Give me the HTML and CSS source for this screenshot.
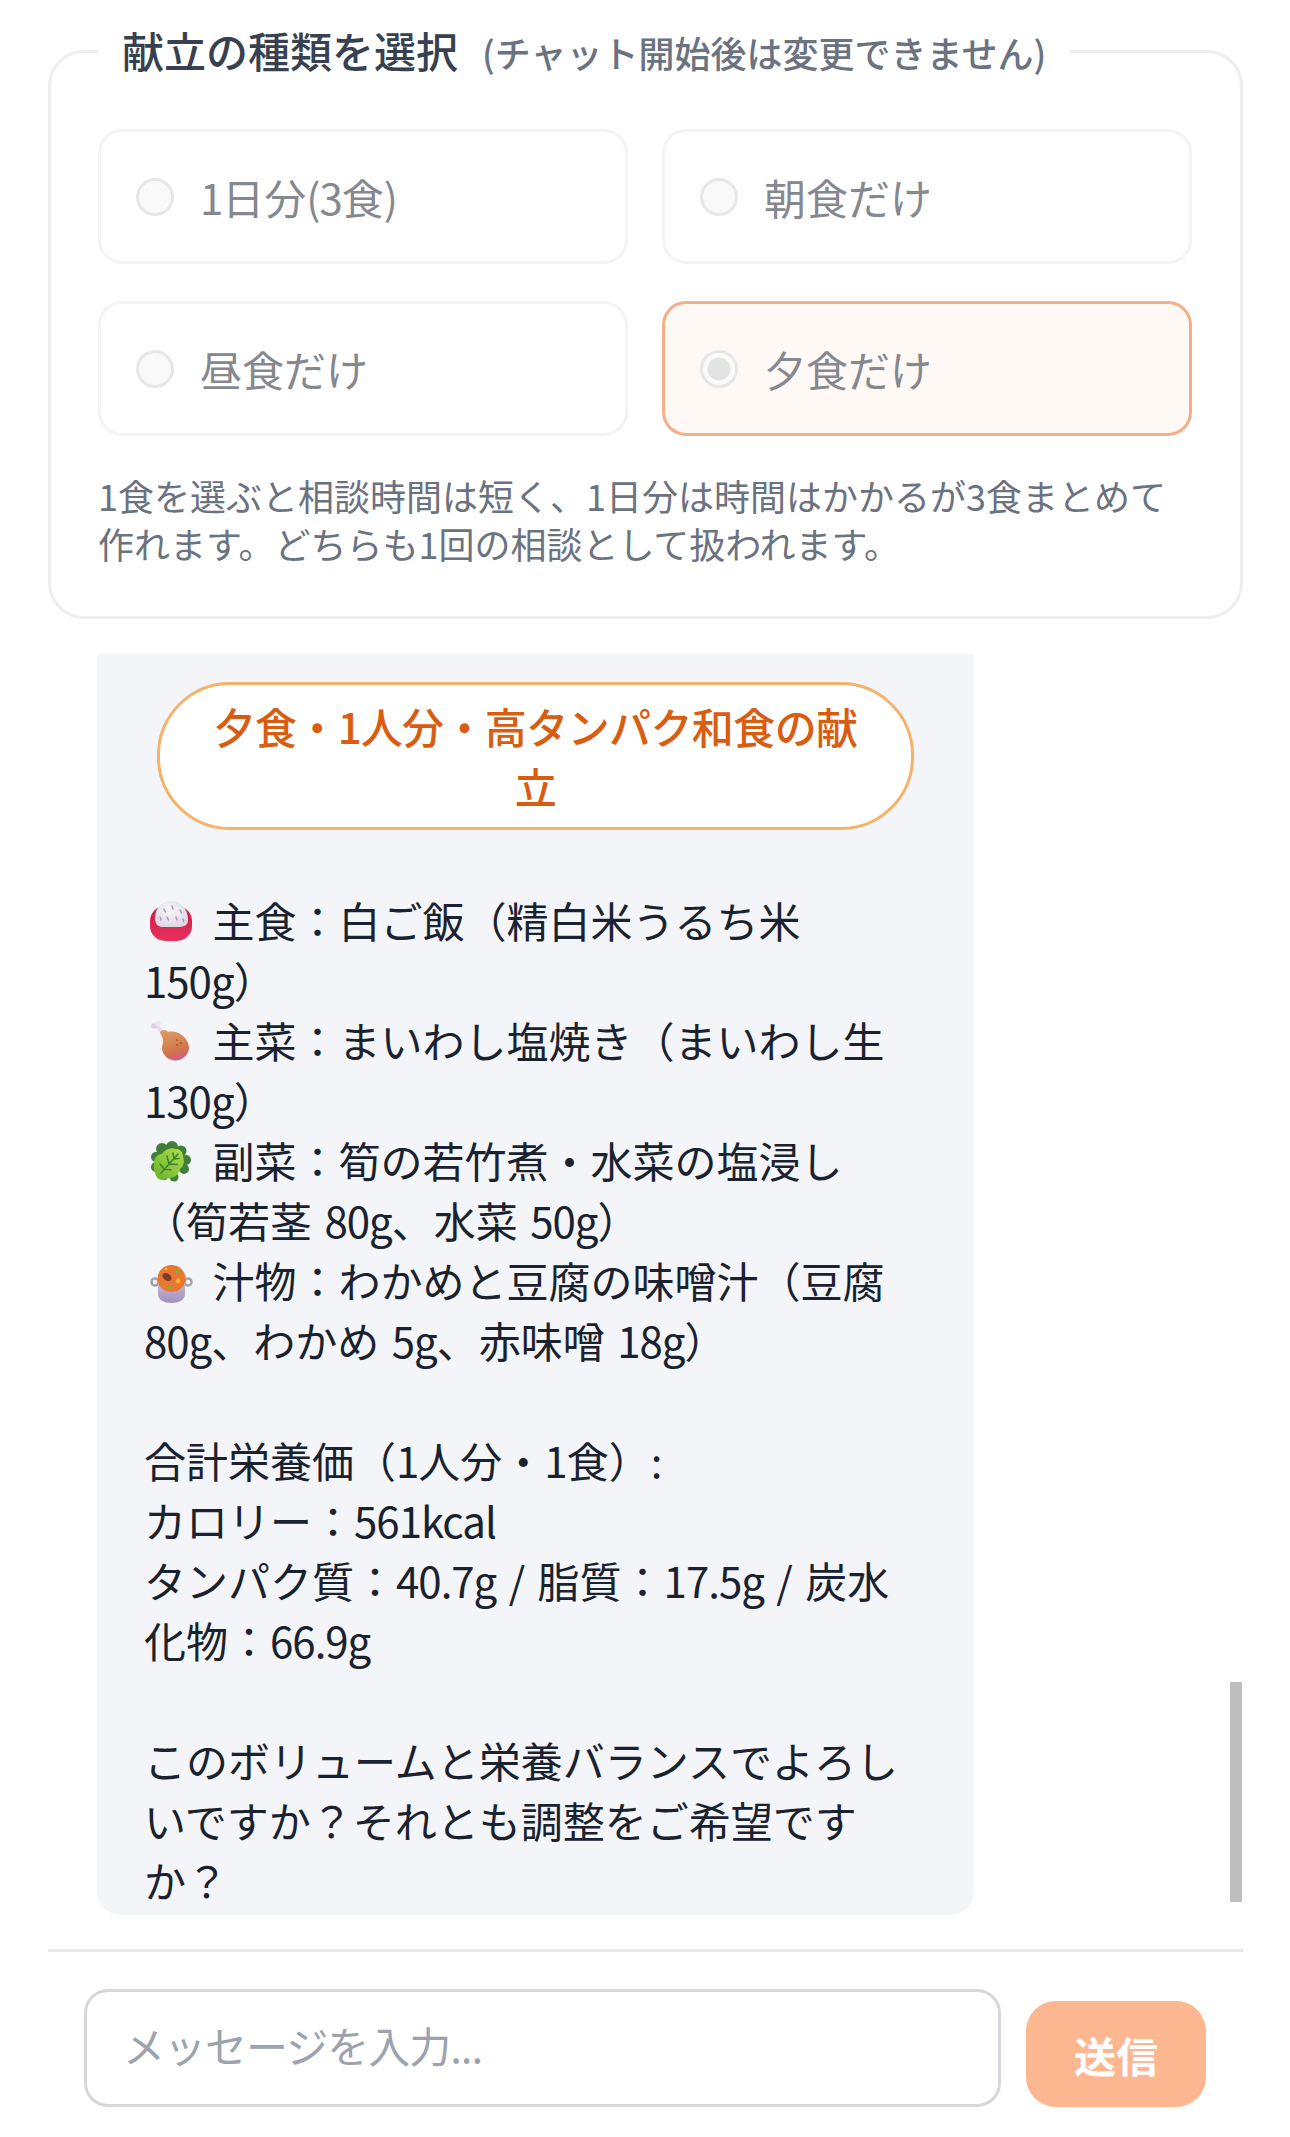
FILE: index.html
```html
<!DOCTYPE html>
<html lang="ja">
<head>
<meta charset="utf-8">
<title>献立チャット</title>
<link rel="stylesheet" href="styles.css">
</head>
<body>
<main class="app">
  <fieldset class="picker">
    <legend class="picker-legend"><span class="legend-main">献立の種類を選択</span><span class="legend-sub">(チャット開始後は変更できません)</span></legend>
    <div class="options">
      <label class="option"><input class="radio" type="radio" name="t" disabled><span><span class="num">1</span>日分<span class="num">(3</span>食<span class="num">)</span></span></label>
      <label class="option"><input class="radio" type="radio" name="t" disabled><span>朝食だけ</span></label>
      <label class="option"><input class="radio" type="radio" name="t" disabled><span>昼食だけ</span></label>
      <label class="option option-on"><input class="radio" type="radio" name="t" checked disabled><span>夕食だけ</span></label>
    </div>
    <p class="note">1食を選ぶと相談時間は短く、1日分は時間はかかるが3食まとめて作れます。どちらも1回の相談として扱われます。</p>
  </fieldset>

  <section class="chat">
    <article class="bubble">
      <h2 class="pill">夕食・<span class="num">1</span>人分・高タンパク和食の献立</h2>
      <p class="msg"><svg class="emoji" viewBox="0 0 52 52" aria-hidden="true"><defs><linearGradient id="bowl" x1="0" y1="0" x2="0" y2="1"><stop offset="0" stop-color="#c81f45"/><stop offset="1" stop-color="#ea2f5e"/></linearGradient><radialGradient id="rice" cx=".45" cy=".35" r=".7"><stop offset="0" stop-color="#f8f6fa"/><stop offset="1" stop-color="#dcd6e4"/></radialGradient></defs><rect x="6" y="10" width="42" height="35" rx="15" fill="url(#bowl)"/><path d="M11 22C11 12 18 5 27 5s17 7 17 19c0 6-5 7-10 7H19c-4 0-8-2-8-9z" fill="url(#rice)"/><path d="M20 13l1.500 3M28 10l1 3M36 14l1.500 3M23 21l1.500 3M32 21l1 3M16 21l1 3M39 23l.7 2.500" stroke="#a79ac0" stroke-width="1.500" stroke-linecap="round"/></svg> 主食：白ご飯（精白米うるち米<span class="num">150g</span>）<br>
<svg class="emoji" viewBox="0 0 52 52" aria-hidden="true"><defs><linearGradient id="leg" x1=".3" y1="0" x2=".6" y2="1"><stop offset="0" stop-color="#dd9a62"/><stop offset=".7" stop-color="#d0764a"/><stop offset="1" stop-color="#d6568e"/></linearGradient></defs><path d="M12 9l7 8" stroke="#e8ddee" stroke-width="4" stroke-linecap="round"/><circle cx="10" cy="10" r="2.800" fill="#dcd0e8"/><circle cx="14" cy="7.500" r="2.800" fill="#eee6f2"/><path d="M16 16c3-3 6-2 8 0 11-3 22 8 21 17-2 9-10 13-17 11-8-2-12-10-9-17 1-5-2-7-3-11z" fill="url(#leg)"/><circle cx="33" cy="24" r=".9" fill="#a9562f"/><circle cx="37" cy="27" r=".9" fill="#a9562f"/><circle cx="33" cy="29" r=".9" fill="#a9562f"/></svg> 主菜：まいわし塩焼き（まいわし生<span class="num">130g</span>）<br>
<svg class="emoji" viewBox="0 0 52 52" aria-hidden="true"><defs><linearGradient id="leaf" x1="0" y1="1" x2="1" y2="0"><stop offset="0" stop-color="#69b32b"/><stop offset="1" stop-color="#b0de4a"/></linearGradient></defs><g fill="#3f7f37"><circle cx="28" cy="11" r="6"/><circle cx="18" cy="13" r="6"/><circle cx="37" cy="15" r="5.500"/><circle cx="42" cy="24" r="5"/><circle cx="40" cy="33" r="5"/><circle cx="12" cy="21" r="5"/><circle cx="12" cy="31" r="5"/><circle cx="30" cy="41" r="4.500"/><circle cx="20" cy="40" r="4"/></g><path d="M10 27c0-6 4-9 8-9 3-5 9-7 14-5 5 0 7 4 7 8 2 5 0 10-3 12-2 7-8 10-13 9-5 3-10 2-11-3-2-3-3-8-2-12z" fill="url(#leaf)"/><path d="M17 37l17-19M25 28l-2-8M25 28l8 .5M30 23l-1-6M30 23l5-.5M20 33l-4-5M20 33l7 1" stroke="#3f7f37" stroke-width="1.600" stroke-linecap="round" fill="none"/></svg> 副菜：筍の若竹煮・水菜の塩浸し（筍若茎 <span class="num">80g</span>、水菜 <span class="num">50g</span>）<br>
<svg class="emoji" viewBox="0 0 52 52" aria-hidden="true"><defs><linearGradient id="pot" x1="0" y1="0" x2="0" y2="1"><stop offset="0" stop-color="#c8bcd6"/><stop offset="1" stop-color="#a390bd"/></linearGradient></defs><circle cx="11" cy="26" r="3.500" fill="none" stroke="#a8a2ae" stroke-width="2.600"/><circle cx="44" cy="26" r="3.500" fill="none" stroke="#a8a2ae" stroke-width="2.600"/><path d="M14 24h27v14c0 6-6 9-13.500 9S14 44 14 38z" fill="url(#pot)"/><ellipse cx="27.500" cy="22.500" rx="14" ry="13.500" fill="#e9772f"/><ellipse cx="23" cy="21" rx="5" ry="3.500" fill="#7d3b2c" transform="rotate(35 23 21)"/><circle cx="33" cy="16" r="2.200" fill="#7fae3a"/><circle cx="34" cy="25" r="2.400" fill="#f5b331"/><circle cx="26" cy="31" r="1.900" fill="#7fae3a"/><circle cx="22" cy="13" r="1.300" fill="#f5b331"/></svg> 汁物：わかめと豆腐の味噌汁（豆腐<span class="num">80g</span>、わかめ <span class="num">5g</span>、赤味噌 <span class="num">18g</span>）<br>
<br>
合計栄養価（<span class="num">1</span>人分・<span class="num">1</span>食）:<br>
カロリー：<span class="num">561kcal</span><br>
タンパク質：<span class="num">40.7g</span> / 脂質：<span class="num">17.5g</span> / 炭水化物：<span class="num">66.9g</span><br>
<br>
このボリュームと栄養バランスでよろしいですか？それとも調整をご希望ですか？</p>
    </article>
    <div class="scrollbar"></div>
  </section>

  <form class="composer">
    <input class="composer-input" type="text" placeholder="メッセージを入力...">
    <button class="send" type="button">送信</button>
  </form>
</main>
</body>
</html>
```

FILE: styles.css
```css
* { box-sizing: border-box; }
html, body { margin: 0; padding: 0; background: #fff; }
body { font-family: "Noto Sans CJK JP", "Noto Sans", sans-serif; color: #111827; }
.app { width: 1290px; height: 2137px; padding: 20px 47px 0 48px; display: flex; flex-direction: column; overflow: hidden; }
.num { letter-spacing: -1px; }

.picker { margin: 0; min-width: 0; border: 3px solid #eceef1; border-radius: 36px; padding: 47px 48px 49px 47px; }
.picker-legend { padding: 0 24px; line-height: 60px; white-space: nowrap; display: flex; align-items: baseline; gap: 24px; }
.legend-main { font-size: 42px; font-weight: 500; color: #374151; }
.legend-sub { font-size: 36px; font-weight: 500; color: #6b7280; }

.options { display: grid; grid-template-columns: 1fr 1fr; column-gap: 34px; row-gap: 37px; }
.option { height: 135px; display: flex; align-items: center; gap: 26px; padding: 0 35px; border: 3px solid #f3f4f5; border-radius: 24px; font-size: 42px; color: #85888e; background: #fff; }
.option-on { border-color: #f3b088; background: #fff9f5; }
.radio { appearance: none; -webkit-appearance: none; margin: 0; flex: none; width: 38px; height: 38px; border: 3px solid #e6e7e8; border-radius: 50%; background: #f9f9f9; }
.radio:checked { background: radial-gradient(circle, #e2e5e4 0 11px, #fbfaf9 12px); }

.note { margin: 35px 0 0; font-size: 36px; line-height: 48px; color: #6b7280; }

.chat { position: relative; flex: none; padding: 35px 0 34px 49px; }
.bubble { width: 877px; height: 1261px; padding: 28px 55px 0 47px; background: #f3f5f8; border-radius: 0 0 24px 24px; overflow: hidden; }
.pill { margin: 0 5px 60px 13px; padding: 11px 36px; border: 3px solid #f5b26b; border-radius: 73px; background: #fff; font-size: 42px; font-weight: 500; line-height: 60px; text-align: center; letter-spacing: -.6px; color: #d95d10; }
.msg { margin: 0; font-size: 42px; line-height: 60px; word-spacing: 3px; color: #1a2230; }
.emoji { display: inline-block; width: 52px; height: 52px; margin-right: 4px; vertical-align: -10px; }
.scrollbar { position: absolute; top: 1063px; right: 1px; width: 12px; height: 220px; background: #bdbdbd; }

.composer { flex: none; border-top: 3px solid #e8e9eb; padding: 37px 37px 0 36px; display: flex; align-items: flex-end; gap: 25px; }
.composer-input { flex: none; width: 917px; height: 118px; padding: 0 36px 8px; border: 3px solid #d5d7da; border-radius: 24px; font: inherit; font-size: 42px; color: #111827; background: #fff; }
.composer-input::placeholder { color: #9ca3af; letter-spacing: -1px; }
.send { flex: none; width: 180px; height: 106px; border: 0; border-radius: 30px; background: #fdb790; color: #fff; font: inherit; font-size: 42px; font-weight: 700; }
```
